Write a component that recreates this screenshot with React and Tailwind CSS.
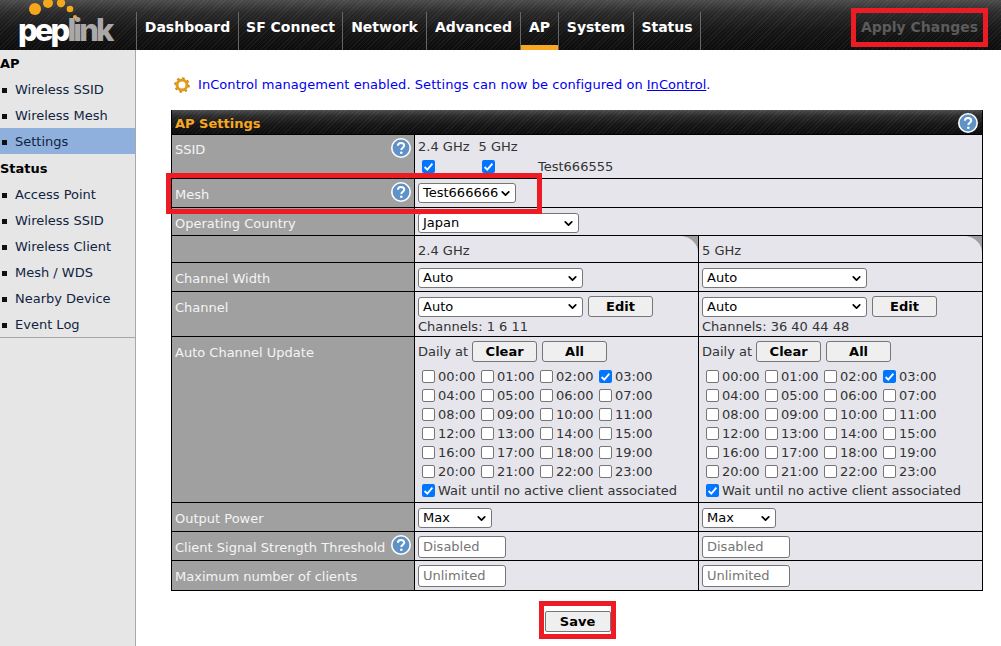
import { ChevronDown } from "lucide-react";

const stripes =
  "bg-[repeating-linear-gradient(135deg,rgba(255,255,255,0.05)_0px,rgba(255,255,255,0.05)_1px,transparent_1px,transparent_3px),linear-gradient(#4c4c4c,#2a2a2a_25%,#161616_60%,#0c0c0c)]";

const hours = Array.from({ length: 24 }, (_, i) => String(i).padStart(2, "0") + ":00");

const Check = ({ checked }) => (
  <span
    className={
      checked
        ? "w-[13px] h-[13px] rounded-[2px] bg-[#0075ff] flex items-center justify-center shrink-0"
        : "w-[13px] h-[13px] rounded-[2px] bg-white border border-[#767676] shrink-0"
    }
  >
    {checked && (
      <svg viewBox="0 0 13 13" className="w-[13px] h-[13px]">
        <path d="M2.6 7 L5.3 9.6 L10.4 3.6" fill="none" stroke="white" strokeWidth="1.8" />
      </svg>
    )}
  </span>
);

const Help = ({ size = "w-[20px] h-[20px]" }) => (
  <svg viewBox="0 0 20 20" className={size + " shrink-0"}>
    <circle cx="10" cy="10" r="9.2" fill="#5f93c8" stroke="white" strokeWidth="1.6" />
    <path
      d="M6.9 7.8 C6.9 5.9 8.3 4.9 10 4.9 C11.8 4.9 13.2 5.9 13.2 7.6 C13.2 9.6 10.3 9.9 10.3 12"
      fill="none"
      stroke="white"
      strokeWidth="2"
    />
    <circle cx="10.3" cy="14.7" r="1.3" fill="white" />
  </svg>
);

const Select = ({ value, width }) => (
  <span
    className={
      width +
      " h-[20px] bg-white border border-[#767676] rounded-[3px] flex items-center justify-between pl-[4px] pr-[3px] text-[13px] text-black"
    }
  >
    {value}
    <ChevronDown size={13} strokeWidth={3.2} className="shrink-0" />
  </span>
);

const Button = ({ label, width }) => (
  <span
    className={
      width +
      " h-[21px] bg-[#efefef] border border-[#767676] rounded-[3px] flex items-center justify-center text-[13px] font-bold text-black"
    }
  >
    {label}
  </span>
);

const Input = ({ value }) => (
  <span className="w-[88px] h-[22px] bg-white border border-[#767676] rounded-[3px] flex items-center pl-[4px] text-[13px] text-[#757575]">
    {value}
  </span>
);

const Label = ({ children }) => (
  <div className="bg-[#a0a0a0] text-[#f4f4f4] text-[13px] pl-[3px] pr-[3px] pt-[6px] flex justify-between items-start border-r border-black whitespace-nowrap">
    {children}
  </div>
);

const Row = ({ label, help, height, children }) => (
  <div className={"grid grid-cols-[243px_1fr] border-b border-black " + height}>
    <Label>
      <span className={label === "SSID" ? "-mt-[1px]" : ""}>{label}</span>
      {help && <span className="-mt-[3px]"><Help /></span>}
    </Label>
    {children}
  </div>
);

const Cell = ({ children, notch, last, top = "pt-[5px]" }) => (
  <div className={"relative bg-[#e5e5eb] pl-[3px] text-[13px] text-[#333] " + top + " " + (last ? "" : "border-r border-black")}>
    {notch && (
      <svg viewBox="0 0 16 16" className="absolute top-0 right-0 w-[16px] h-[16px]">
        <path d="M0 0 H16 V16 C16 8 9 1 0 0 Z" fill="#a0a0a0" />
      </svg>
    )}
    {children}
  </div>
);

const AutoUpdate = ({ last }) => (
  <Cell last={last} top="pt-[4px]">
    <div className="flex items-center gap-[4px] h-[21px]">
      <span>Daily at</span>
      <Button label="Clear" width="w-[65px]" />
      <span className="ml-[1px]"><Button label="All" width="w-[65px]" /></span>
    </div>
    <div className="grid grid-cols-[59px_59px_59px_59px] w-fit mt-[5px] pl-[4px]">
      {hours.map((h) => (
        <label key={h} className="flex items-center gap-[3px] h-[19px] whitespace-nowrap">
          <Check checked={h === "03:00"} />
          {h}
        </label>
      ))}
    </div>
    <div className="flex items-center gap-[3px] h-[19px] pl-[4px] whitespace-nowrap">
      <Check checked />
      Wait until no active client associated
    </div>
  </Cell>
);

const TwoCol = ({ label, help, height, last, children }) => (
  <div className={"grid grid-cols-[243px_284px_1fr] " + height + (last ? "" : " border-b border-black")}>
    <Label>
      <span>{label}</span>
      {help && <span className="-mt-[3px]"><Help /></span>}
    </Label>
    {children}
  </div>
);

const Table = () => (
  <div className="relative w-[812px] ml-[35px] border-x border-b border-black">
    <div className={"h-[25px] flex items-start justify-between pl-[3px] pr-[4px] pt-[3px] border-b border-black " + stripes}>
      <span className="text-[#f7a823] text-[13px] font-bold leading-[20px] mt-[1px]">AP Settings</span>
      <Help />
    </div>
    <Row label="SSID" help height="h-[44px]">
      <Cell last top="pt-[4px]">
        <div className="flex gap-[9px] leading-[15px]">
          <span>2.4 GHz</span>
          <span>5 GHz</span>
        </div>
        <div className="flex items-center mt-[3px] pl-[4px]">
          <Check checked />
          <span className="ml-[47px]"><Check checked /></span>
          <span className="ml-[43px]">Test666555</span>
        </div>
      </Cell>
    </Row>
    <Row label="Mesh" help height="h-[29px]">
      <Cell last top="pt-[4px]">
        <Select value="Test666666" width="w-[98px]" />
      </Cell>
    </Row>
    <Row label="Operating Country" height="h-[28px]">
      <Cell last>
        <Select value="Japan" width="w-[161px]" />
      </Cell>
    </Row>
    <TwoCol height="h-[27px]">
      <Cell notch>2.4 GHz</Cell>
      <Cell notch last>5 GHz</Cell>
    </TwoCol>
    <TwoCol label="Channel Width" height="h-[29px]">
      <Cell><Select value="Auto" width="w-[165px]" /></Cell>
      <Cell last><Select value="Auto" width="w-[165px]" /></Cell>
    </TwoCol>
    <TwoCol label="Channel" height="h-[45px]">
      {["1 6 11", "36 40 44 48"].map((c, i) => (
        <Cell key={c} last={i === 1} top="pt-[4px]">
          <div className="flex items-center gap-[5px]">
            <Select value="Auto" width="w-[165px]" />
            <Button label="Edit" width="w-[65px]" />
          </div>
          <div className="mt-[2px] leading-[15px]">Channels: {c}</div>
        </Cell>
      ))}
    </TwoCol>
    <TwoCol label="Auto Channel Update" height="h-[166px]">
      <AutoUpdate />
      <AutoUpdate last />
    </TwoCol>
    <TwoCol label="Output Power" height="h-[29px]">
      <Cell><Select value="Max" width="w-[74px]" /></Cell>
      <Cell last><Select value="Max" width="w-[74px]" /></Cell>
    </TwoCol>
    <TwoCol label="Client Signal Strength Threshold" help height="h-[29px]">
      <Cell top="pt-[4px]"><Input value="Disabled" /></Cell>
      <Cell last top="pt-[4px]"><Input value="Disabled" /></Cell>
    </TwoCol>
    <TwoCol label="Maximum number of clients" height="h-[29px]" last>
      <Cell top="pt-[4px]"><Input value="Unlimited" /></Cell>
      <Cell last top="pt-[4px]"><Input value="Unlimited" /></Cell>
    </TwoCol>
    {/* red annotation round the mesh row */}
    <div className="absolute left-[-6px] top-[63px] w-[376px] h-[41px] border-[5px] border-[#ed1c24]" />
  </div>
);

const tabs = [
  { label: "Dashboard", w: "w-[102px]" },
  { label: "SF Connect", w: "w-[104px]" },
  { label: "Network", w: "w-[84px]" },
  { label: "Advanced", w: "w-[94px]" },
  { label: "AP", w: "w-[38px]", active: true },
  { label: "System", w: "w-[75px]" },
  { label: "Status", w: "w-[67px]" },
];

const Header = () => (
  <div className={"relative h-[50px] flex " + stripes}>
    <div className="relative w-[136px] shrink-0">
      {/* logo dots */}
      <svg viewBox="0 0 90 20" className="absolute left-[29px] top-0 w-[90px] h-[20px]">
        <circle cx="6" cy="9" r="6" fill="#f5a81c" />
        <circle cx="19" cy="3" r="5" fill="#f5a81c" />
        <circle cx="32" cy="3" r="4.2" fill="#f5a81c" />
        <circle cx="41" cy="9" r="3.3" fill="#f5a81c" />
        <circle cx="46" cy="17" r="2" fill="#f5a81c" />
      </svg>
      <span className="absolute left-[18px] top-[11px] text-[31px] leading-[38px] font-extrabold tracking-[-2.9px] font-['Inter',sans-serif] text-white">
        pep<span className="text-[#a9a9a9]">link</span>
      </span>
    </div>
    <div className="flex self-end h-[38px] border-l border-[#666]">
      {tabs.map((t) => (
        <div key={t.label} className={t.w + " relative border-r border-[#666] flex items-center justify-center text-white text-[14px] font-bold pb-[7px] whitespace-nowrap"}>
          {t.label}
          {t.active && <div className="absolute left-0 right-0 bottom-0 h-[5px] bg-[#f7a823]" />}
        </div>
      ))}
    </div>
    <div className="ml-auto mr-[13px] mt-[8px] w-[137px] h-[39px] border-[5px] border-[#ed1c24] flex items-center justify-center text-[14px] font-bold text-[#5c5c5c] whitespace-nowrap">
      Apply Changes
    </div>
  </div>
);

const navAP = ["Wireless SSID", "Wireless Mesh", "Settings"];
const navStatus = ["Access Point", "Wireless SSID", "Wireless Client", "Mesh / WDS", "Nearby Device", "Event Log"];

const NavItem = ({ label, active }) => (
  <div className={"h-[26px] flex items-center text-[13px] text-[#10243f] pl-[2px] pt-[2px] " + (active ? "bg-[#8fb0dc]" : "")}>
    <span className="w-[5px] h-[5px] bg-[#111]" />
    <span className="ml-[8px]">{label}</span>
  </div>
);

const Sidebar = () => (
  <div className="w-[136px] shrink-0 bg-[#e6e6e6] border-r border-[#a8a8a8]">
    <div className="pt-[1px] border-b border-[#a8a8a8]">
      <div className="h-[25px] flex items-center text-[13px] font-bold text-black">AP</div>
      {navAP.map((n) => (
        <NavItem key={n} label={n} active={n === "Settings"} />
      ))}
      <div className="h-[27px] pt-[2px] flex items-center text-[13px] font-bold text-black">Status</div>
      {navStatus.map((n) => (
        <NavItem key={n} label={n} />
      ))}
    </div>
  </div>
);

const App = () => {
  return (
    <div className="w-[1001px] h-[646px] overflow-hidden bg-white font-['DejaVu_Sans',sans-serif]">
      <Header />
      <div className="flex h-[596px]">
        <Sidebar />
        <div className="flex-1">
          <div className="flex items-center h-[20px] mt-[25px] ml-[38px] text-[13px] text-[#0000ee] tracking-[0.06px]">
            <svg viewBox="0 0 16 16" className="w-[16px] h-[16px]">
              <circle cx="8" cy="8" r="5" fill="none" stroke="#e59a16" strokeWidth="3" />
              <circle cx="8" cy="8" r="7" fill="none" stroke="#c9841a" strokeWidth="1.6" strokeDasharray="2.5 3" />
            </svg>
            <span className="ml-[8px]">InControl management enabled. Settings can now be configured on </span>
            <span className="underline ml-[4px]">InControl</span>
            <span>.</span>
          </div>
          <div className="mt-[15px]">
            <Table />
          </div>
          <div className="ml-[403px] mt-[10px] w-[77px] h-[38px] border-[5px] border-[#ed1c24] flex items-start justify-center pt-[5px]">
            <span className="w-[66px] h-[21px] bg-[#efefef] border border-[#767676] rounded-[2px] flex items-center justify-center text-[13px] font-bold text-black">Save</span>
          </div>
        </div>
      </div>
    </div>
  );
};

export default App;
